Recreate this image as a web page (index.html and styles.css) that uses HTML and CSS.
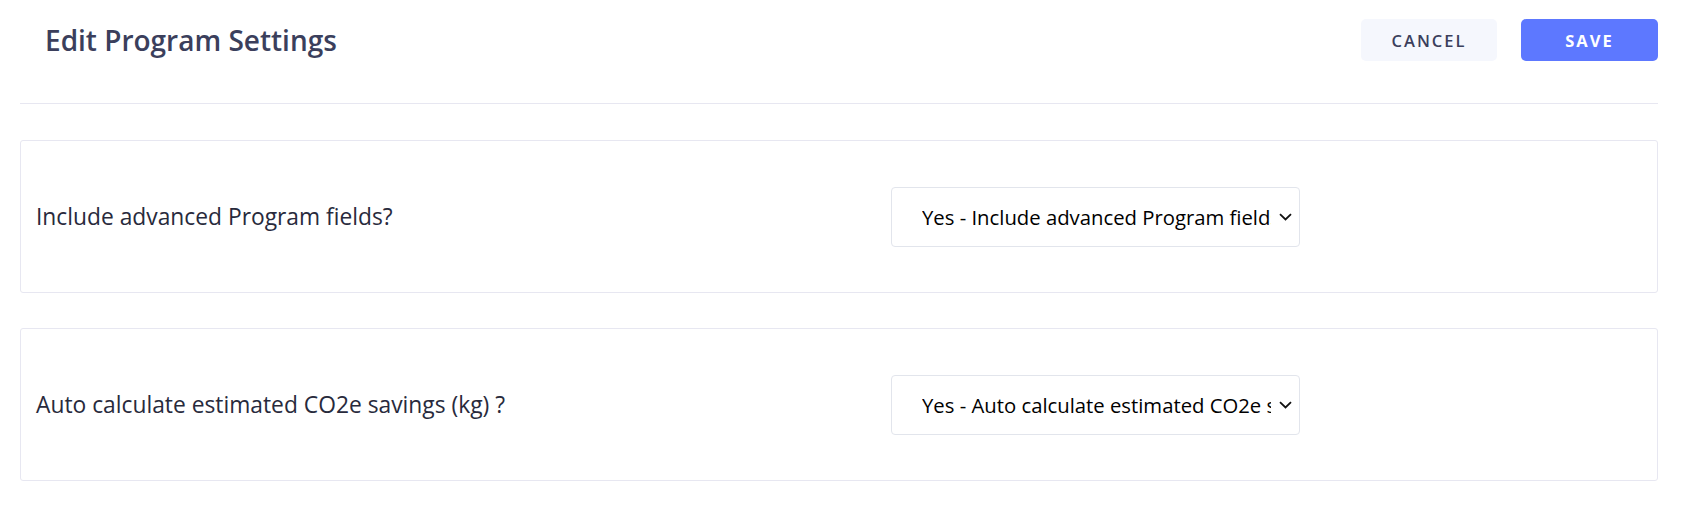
FILE: index.html
```html
<!DOCTYPE html>
<html>
<head>
<meta charset="utf-8">
<link rel="stylesheet" href="styles.css">
</head>
<body>
<div class="page">
  <header class="header">
    <h1 class="title">Edit Program Settings</h1>
    <div class="actions">
      <button class="btn btn-cancel">CANCEL</button>
      <button class="btn btn-save">SAVE</button>
    </div>
  </header>
  <section class="card">
    <label class="label">Include advanced Program fields?</label>
    <div class="select-wrap">
      <select class="select">
        <option>Yes - Include advanced Program fields</option>
        <option>No</option>
      </select>
      <svg class="chev" width="13" height="8" viewBox="0 0 13 8"><path d="M1 1.2 L6.5 6.5 L12 1.2" fill="none" stroke="#111" stroke-width="1.8"/></svg>
    </div>
  </section>
  <section class="card">
    <label class="label">Auto calculate estimated CO2e savings (kg) ?</label>
    <div class="select-wrap">
      <select class="select">
        <option>Yes - Auto calculate estimated CO2e savings</option>
        <option>No</option>
      </select>
      <svg class="chev" width="13" height="8" viewBox="0 0 13 8"><path d="M1 1.2 L6.5 6.5 L12 1.2" fill="none" stroke="#111" stroke-width="1.8"/></svg>
    </div>
  </section>
</div>
</body>
</html>
```
FILE: styles.css
```css
* { box-sizing: border-box; }
html, body { margin: 0; background: #fff; }
body { font-family: "Open Sans", "Lato", sans-serif; }
.page { padding: 0 27px 0 20px; }
.header {
  display: flex;
  align-items: center;
  justify-content: space-between;
  padding: 19px 0 42px 25px;
  border-bottom: 1px solid #e7e7f1;
}
.title {
  margin: 0;
  font-size: 28px;
  font-weight: 600;
  color: #3b3f5c;
}
.actions { display: flex; gap: 24px; }
.btn {
  height: 42px;
  width: 137px;
  border: none;
  border-radius: 5px;
  font-family: "Open Sans", sans-serif;
  font-size: 16.5px;
  letter-spacing: 2px;
  cursor: pointer;
}
.btn-cancel { background: #f5f7fd; color: #3b3f5c; font-weight: 600; width: 136px; }
.btn-save { background: #5d78ff; color: #fff; font-weight: 700; }
.card {
  margin-top: 35px;
  height: 153px;
  border: 1px solid #e7e7f1;
  border-radius: 3px;
  display: grid;
  grid-template-columns: 855px 409px;
  align-items: center;
  padding-left: 15px;
}
.card:first-of-type { margin-top: 36px; }
.label {
  font-size: 22.8px;
  color: #282a3c;
}
.select-wrap { position: relative; height: 60px; }
.select {
  appearance: none;
  -webkit-appearance: none;
  width: 409px;
  height: 60px;
  border: 1px solid #e2e5ec;
  border-radius: 4px;
  background: #fff;
  padding: 0 28px 0 30px;
  font-family: "Open Sans", sans-serif;
  font-size: 20.3px;
  color: #000;
  outline: none;
}
.chev { position: absolute; right: 8px; top: 26px; pointer-events: none; }
```
